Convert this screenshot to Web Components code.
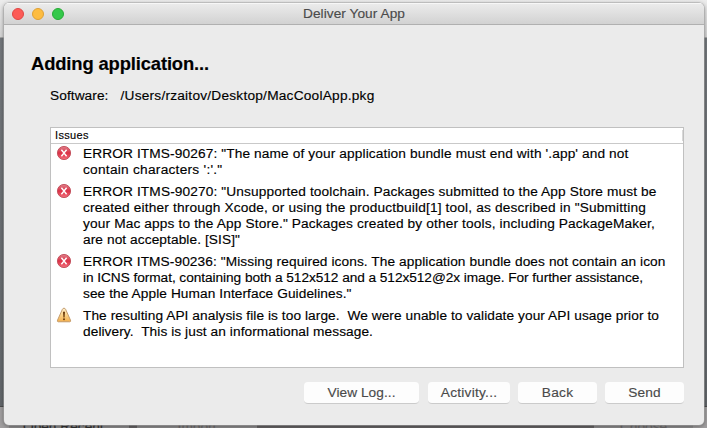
<!DOCTYPE html>
<html lang="en">
<head>
<meta charset="utf-8">
<title>Deliver Your App</title>
<style>
html,body{margin:0;width:707px;height:428px;overflow:hidden}
body{font-family:"Liberation Sans",Arial,sans-serif;font-size:13.7px;color:#000;-webkit-text-stroke:.15px currentColor}
</style>
</head>
<body>
<app-desktop>
  <mac-window caption="Deliver Your App">
    <fit-line slot="heading" width="178">Adding application...</fit-line>
    <fit-line slot="label" width="58.5">Software:</fit-line>
    <fit-line slot="path" width="254">/Users/rzaitov/Desktop/MacCoolApp.pkg</fit-line>
    <issue-table>
      <issue-row kind="error">
        <fit-line width="545.5">ERROR ITMS-90267: "The name of your application bundle must end with '.app' and not</fit-line>
        <fit-line width="139.5">contain characters ':'."</fit-line>
      </issue-row>
      <issue-row kind="error">
        <fit-line width="573.5">ERROR ITMS-90270: "Unsupported toolchain. Packages submitted to the App Store must be</fit-line>
        <fit-line width="563">created either through Xcode, or using the productbuild[1] tool, as described in "Submitting</fit-line>
        <fit-line width="572">your Mac apps to the App Store." Packages created by other tools, including PackageMaker,</fit-line>
        <fit-line width="157">are not acceptable. [SIS]"</fit-line>
      </issue-row>
      <issue-row kind="error">
        <fit-line width="582.5">ERROR ITMS-90236: "Missing required icons. The application bundle does not contain an icon</fit-line>
        <fit-line width="560">in ICNS format, containing both a 512x512 and a 512x512@2x image. For further assistance,</fit-line>
        <fit-line width="268.5">see the Apple Human Interface Guidelines."</fit-line>
      </issue-row>
      <issue-row kind="warning">
        <fit-line width="576">The resulting API analysis file is too large.  We were unable to validate your API usage prior to</fit-line>
        <fit-line width="290">delivery.  This is just an informational message.</fit-line>
      </issue-row>
    </issue-table>
    <mac-button slot="actions" style="width:115px;margin-right:1px"><fit-line width="68">View Log...</fit-line></mac-button>
    <mac-button slot="actions" style="width:82px"><fit-line width="56.5">Activity...</fit-line></mac-button>
    <mac-button slot="actions" style="width:79px"><fit-line width="31.5">Back</fit-line></mac-button>
    <mac-button slot="actions" style="width:79px"><fit-line width="32.5">Send</fit-line></mac-button>
  </mac-window>
</app-desktop>
<script>
function define(name, html, setup) {
  customElements.define(name, class extends HTMLElement {
    constructor() {
      super();
      const t = document.createElement('template');
      t.innerHTML = html.trim();
      this.attachShadow({mode: 'open'}).append(t.content.cloneNode(true));
    }
    connectedCallback() { if (setup) setup(this, this.shadowRoot); }
  });
}

define('app-desktop', `
<style>
:host{display:grid;position:relative;width:707px;height:428px;overflow:hidden;grid-template-rows:37px 1px 368px 1px 21px}
.top{background:linear-gradient(#ececec,#d4d4d4)}
.edge{background:#a5a5a5}
.mid{background:linear-gradient(#73777b,#62666a)}
.line{background:#4b4b4b}
.bar{display:grid;grid-template-columns:9px 120px 8px 120px 337px 99px 14px;background:#918f90;line-height:15px;color:#4c4a4b;overflow:hidden}
.bar div{padding-top:12px;white-space:nowrap;text-align:center;background:#8e8c8d}
.bar .k{background:#666465}
.bar .o{text-align:left;padding-left:14px;color:#333}
.bar .dim{color:#6d6b6c}
.bar .e{background:#a09e9f}
.win{position:absolute;left:4px;top:3px}
</style>
<div class="top"></div><div class="edge"></div><div class="mid"></div><div class="line"></div>
<div class="bar"><div class="e"></div><div class="o">Open Recent</div><div class="k"></div><div class="dim">Import</div><div class="k"></div><div class="dim">Choose</div><div class="e"></div></div>
<div class="win"><slot></slot></div>`);

define('mac-window', `
<style>
:host{display:flex;flex-direction:column;width:700px;height:422px;border-radius:5px;background:#ebebeb;box-shadow:0 0 0 .5px #aaa,0 1px 4px rgba(0,0,0,.45);overflow:hidden}
header{display:grid;grid-template-columns:60px 1fr 60px;align-items:center;height:21px;flex:none;border-bottom:1px solid #b0b0b0;background:linear-gradient(#ececec,#d2d2d2);box-shadow:inset 0 1px #f7f7f7;color:#4b4b4b}
.lights{display:flex;gap:8px;padding-left:8px}
i{width:12px;height:12px;border-radius:50%;box-sizing:border-box;background:#fc5b57;border:1px solid #df4744}
i+i{background:#fdbc40;border-color:#dea034}
i+i+i{background:#34c84a;border-color:#27aa35}
.title{display:flex;justify-content:center}
main{display:flex;flex-direction:column;padding:0 20px 0 27px}
.h{font-size:18.4px;line-height:22px;font-weight:bold;margin-top:28px}
.s{display:flex;gap:12px;line-height:16px;margin:13px 0 23px 19px}
.t{margin-left:19px}
.a{display:flex;justify-content:flex-end;gap:8px;margin-top:14px}
</style>
<header><div class="lights"><i></i><i></i><i></i></div><div class="title"><fit-line width="102"></fit-line></div></header>
<main><div class="h"><slot name="heading"></slot></div>
<div class="s"><slot name="label"></slot><slot name="path"></slot></div>
<div class="t"><slot></slot></div>
<div class="a"><slot name="actions"></slot></div></main>`,
(el, root) => { root.querySelector('fit-line').textContent = el.getAttribute('caption'); });

define('issue-table', `
<style>
:host{display:flex;flex-direction:column;box-sizing:border-box;height:241px;width:634px;border:1px solid #c0c0c0;background:#fff}
.head{height:15px;line-height:15px;font-size:11px;padding-left:4px;border-bottom:1px solid #c9c9c9;display:flex}
.head span{letter-spacing:.35px;flex:1}
.head b{width:1px;height:11px;margin-top:2px;background:#d8d8d8}
.rows{display:flex;flex-direction:column;gap:6px;padding:2px 0 0 5px}
</style>
<div class="head"><span>Issues</span><b></b></div><div class="rows"><slot></slot></div>`);

define('issue-row', `
<style>
:host{display:grid;grid-template-columns:16px 1fr;column-gap:11px;line-height:16px}
svg{width:16px;height:16px;display:block;margin-top:-1px}
:host([kind=error]) .warn,:host([kind=warning]) .err{display:none}
.txt{display:flex;flex-direction:column;align-items:flex-start}
</style>
<div>
<svg class="err" viewBox="0 0 16 16"><defs><linearGradient id="r" x2="0" y2="1"><stop stop-color="#e0808a"/><stop offset=".5" stop-color="#db3046"/><stop offset="1" stop-color="#f4707c"/></linearGradient></defs><circle cx="8" cy="8" r="6.6" fill="url(#r)" stroke="#c04c58" stroke-width=".9"/><path d="M5.4 4.8 10.6 11.2M10.6 4.8 5.4 11.2" stroke="#fff" stroke-width="1.4"/></svg>
<svg class="warn" viewBox="0 0 16 16"><defs><linearGradient id="y" x2="0" y2="1"><stop stop-color="#fff0cf"/><stop offset=".55" stop-color="#fbcf83"/><stop offset="1" stop-color="#f3ae4b"/></linearGradient></defs><path d="M8 1.2Q9.1 1.2 9.6 2.3L14.5 13.2Q15 14.7 13.7 14.8H2.3Q1 14.7 1.5 13.2L6.4 2.3Q6.9 1.2 8 1.2Z" fill="url(#y)" stroke="#bd9464" stroke-width=".9"/><path d="M7 4.8h2L8.6 10.4H7.4Z" fill="#6b3b0b"/><circle cx="8" cy="12.2" r="1" fill="#6b3b0b"/></svg>
</div><div class="txt"><slot></slot></div>`);

define('mac-button', `
<style>
:host{display:flex;align-items:center;justify-content:center;height:22px;border-radius:4px;box-sizing:border-box;background:#fdfdfd;border-bottom:1px solid #cbcbcb;color:#4a4a4a;line-height:16px;padding-top:1px}
</style><slot></slot>`);

// A single line of text, tracked so that it spans the given width.
define('fit-line', `
<style>:host{display:block}span{display:inline-block;white-space:pre}</style><span><slot></slot></span>`,
(el, root) => {
  const fit = () => {
    const s = root.querySelector('span'), n = el.textContent.length;
    if (!n) return;
    s.style.letterSpacing = '0px';
    const gap = (parseFloat(el.getAttribute('width')) - s.getBoundingClientRect().width) / n;
    s.style.letterSpacing = gap.toFixed(4) + 'px';
  };
  root.querySelector('slot').addEventListener('slotchange', fit);
  fit();
});
</script>
</body>
</html>
